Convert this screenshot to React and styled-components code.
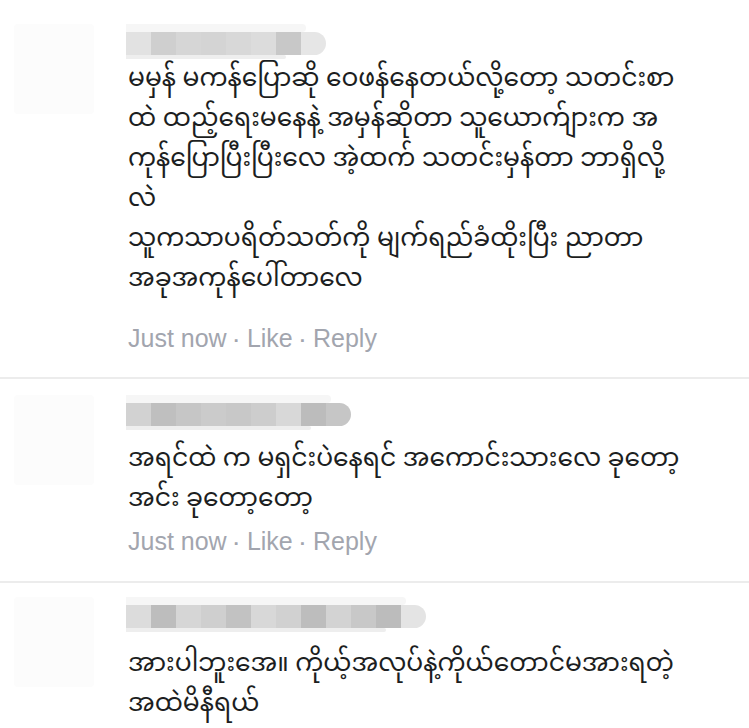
import React from "react";
import styled, { createGlobalStyle } from "styled-components";

const comments = [
  {
    id: 1,
    padTop: 24,
    padBottom: 21,
    gap: 2,
    metaGap: 22,
    name: ["#e2e2e2", "#cfcfcf", "#d6d6d6", "#d4d4d4", "#d8d8d8", "#dcdcdc", "#c8c8c8", "#e6e6e6"],
    lines: [
      "မမှန် မကန်ပြောဆို ဝေဖန်နေတယ်လို့တော့ သတင်းစာ",
      "ထဲ ထည့်ရေးမနေနဲ့ အမှန်ဆိုတာ သူယောက်ျားက အ",
      "ကုန်ပြောပြီးပြီးလေ အဲ့ထက် သတင်းမှန်တာ ဘာရှိလို့",
      "လဲ",
      "သူကသာပရိတ်သတ်ကို မျက်ရည်ခံထိုးပြီး ညာတာ",
      "အခုအကုန်ပေါ်တာလေ",
    ],
    meta: true,
  },
  {
    id: 2,
    padTop: 16,
    padBottom: 22,
    gap: 11,
    metaGap: 5,
    name: ["#d2d2d2", "#bfbfbf", "#c6c6c6", "#cbcbcb", "#c8c8c8", "#cdcdcd", "#d8d8d8", "#bcbcbc", "#c6c6c6"],
    lines: ["အရင်ထဲ က မရှင်းပဲနေရင် အကောင်းသားလေ ခုတော့", "အင်း ခုတော့တော့"],
    meta: true,
  },
  {
    id: 3,
    padTop: 14,
    padBottom: 0,
    gap: 14,
    metaGap: 0,
    name: ["#dcdcdc", "#bdbdbd", "#d6d6d6", "#cfcfcf", "#c2c2c2", "#d8d8d8", "#d1d1d1", "#bdbdbd", "#d3d3d3", "#c8c8c8", "#bcbcbc", "#e4e4e4"],
    lines: ["အားပါဘူးအေ။ ကိုယ့်အလုပ်နဲ့ကိုယ်တောင်မအားရတဲ့", "အထဲမိနီရယ်"],
    meta: false,
  },
];

const App = () => {
  return (
    <Page>
      <GlobalStyle />
      {comments.map((c, i) => (
        <Comment key={c.id} $first={i === 0} $padTop={c.padTop} $padBottom={c.padBottom}>
          <Avatar />
          <Body>
            <Name $gap={c.gap}>
              <NameEdge $top />
              <NameRow>
                {c.name.map((col, j) => (
                  <Pixel key={j} style={{ background: col }} />
                ))}
              </NameRow>
              <NameEdge />
            </Name>
            <Text>
              {c.lines.map((l, j) => (
                <Line key={j}>{l}</Line>
              ))}
            </Text>
            {c.meta && (
              <Meta $gap={c.metaGap}>
                Just now <Dot>·</Dot> Like <Dot>·</Dot> Reply
              </Meta>
            )}
          </Body>
        </Comment>
      ))}
    </Page>
  );
};

export default App;

const GlobalStyle = createGlobalStyle`
  html, body {
    margin: 0;
    padding: 0;
    background: #ffffff;
  }
  body {
    font-family: "Noto Sans Myanmar", "Padauk", "Myanmar Text", "Noto Sans", "DejaVu Sans", sans-serif;
    overflow: hidden;
  }
`;

const Page = styled.div`
  width: 749px;
  height: 728px;
  background: #fff;
  overflow: hidden;
`;

const Comment = styled.div`
  display: flex;
  padding-top: ${(p) => p.$padTop}px;
  padding-bottom: ${(p) => p.$padBottom}px;
  border-top: ${(p) => (p.$first ? "none" : "2px solid #ececec")};
`;

const Avatar = styled.div`
  width: 80px;
  height: 90px;
  margin: 0 34px 0 14px;
  background: #fcfcfc;
  border-radius: 4px;
  flex-shrink: 0;
`;

const Body = styled.div`
  display: flex;
  flex-direction: column;
`;

const Name = styled.div`
  display: flex;
  flex-direction: column;
  align-self: flex-start;
  margin-left: -2px;
  margin-bottom: ${(p) => p.$gap}px;
`;

const NameRow = styled.div`
  display: flex;
  height: 23px;
  border-radius: 0 12px 12px 0;
  overflow: hidden;
`;

const Pixel = styled.div`
  width: 25px;
  height: 100%;
`;

const NameEdge = styled.div`
  height: ${(p) => (p.$top ? 8 : 4)}px;
  background: ${(p) => (p.$top ? "#f6f6f6" : "#eeeeee")};
  border-radius: 0 8px 8px 0;
  margin-right: ${(p) => (p.$top ? 20 : 40)}px;
`;

const Text = styled.div`
  display: flex;
  flex-direction: column;
`;

const Line = styled.div`
  font-size: 25px;
  line-height: 40px;
  height: 40px;
  color: #1c1e21;
  white-space: nowrap;
`;

const Meta = styled.div`
  margin-top: ${(p) => p.$gap}px;
  font-family: "Liberation Sans", Arial, sans-serif;
  font-size: 25px;
  line-height: 30px;
  color: #a2a5ae;
`;

const Dot = styled.span`
  font-weight: bold;
  font-size: 19px;
`;
